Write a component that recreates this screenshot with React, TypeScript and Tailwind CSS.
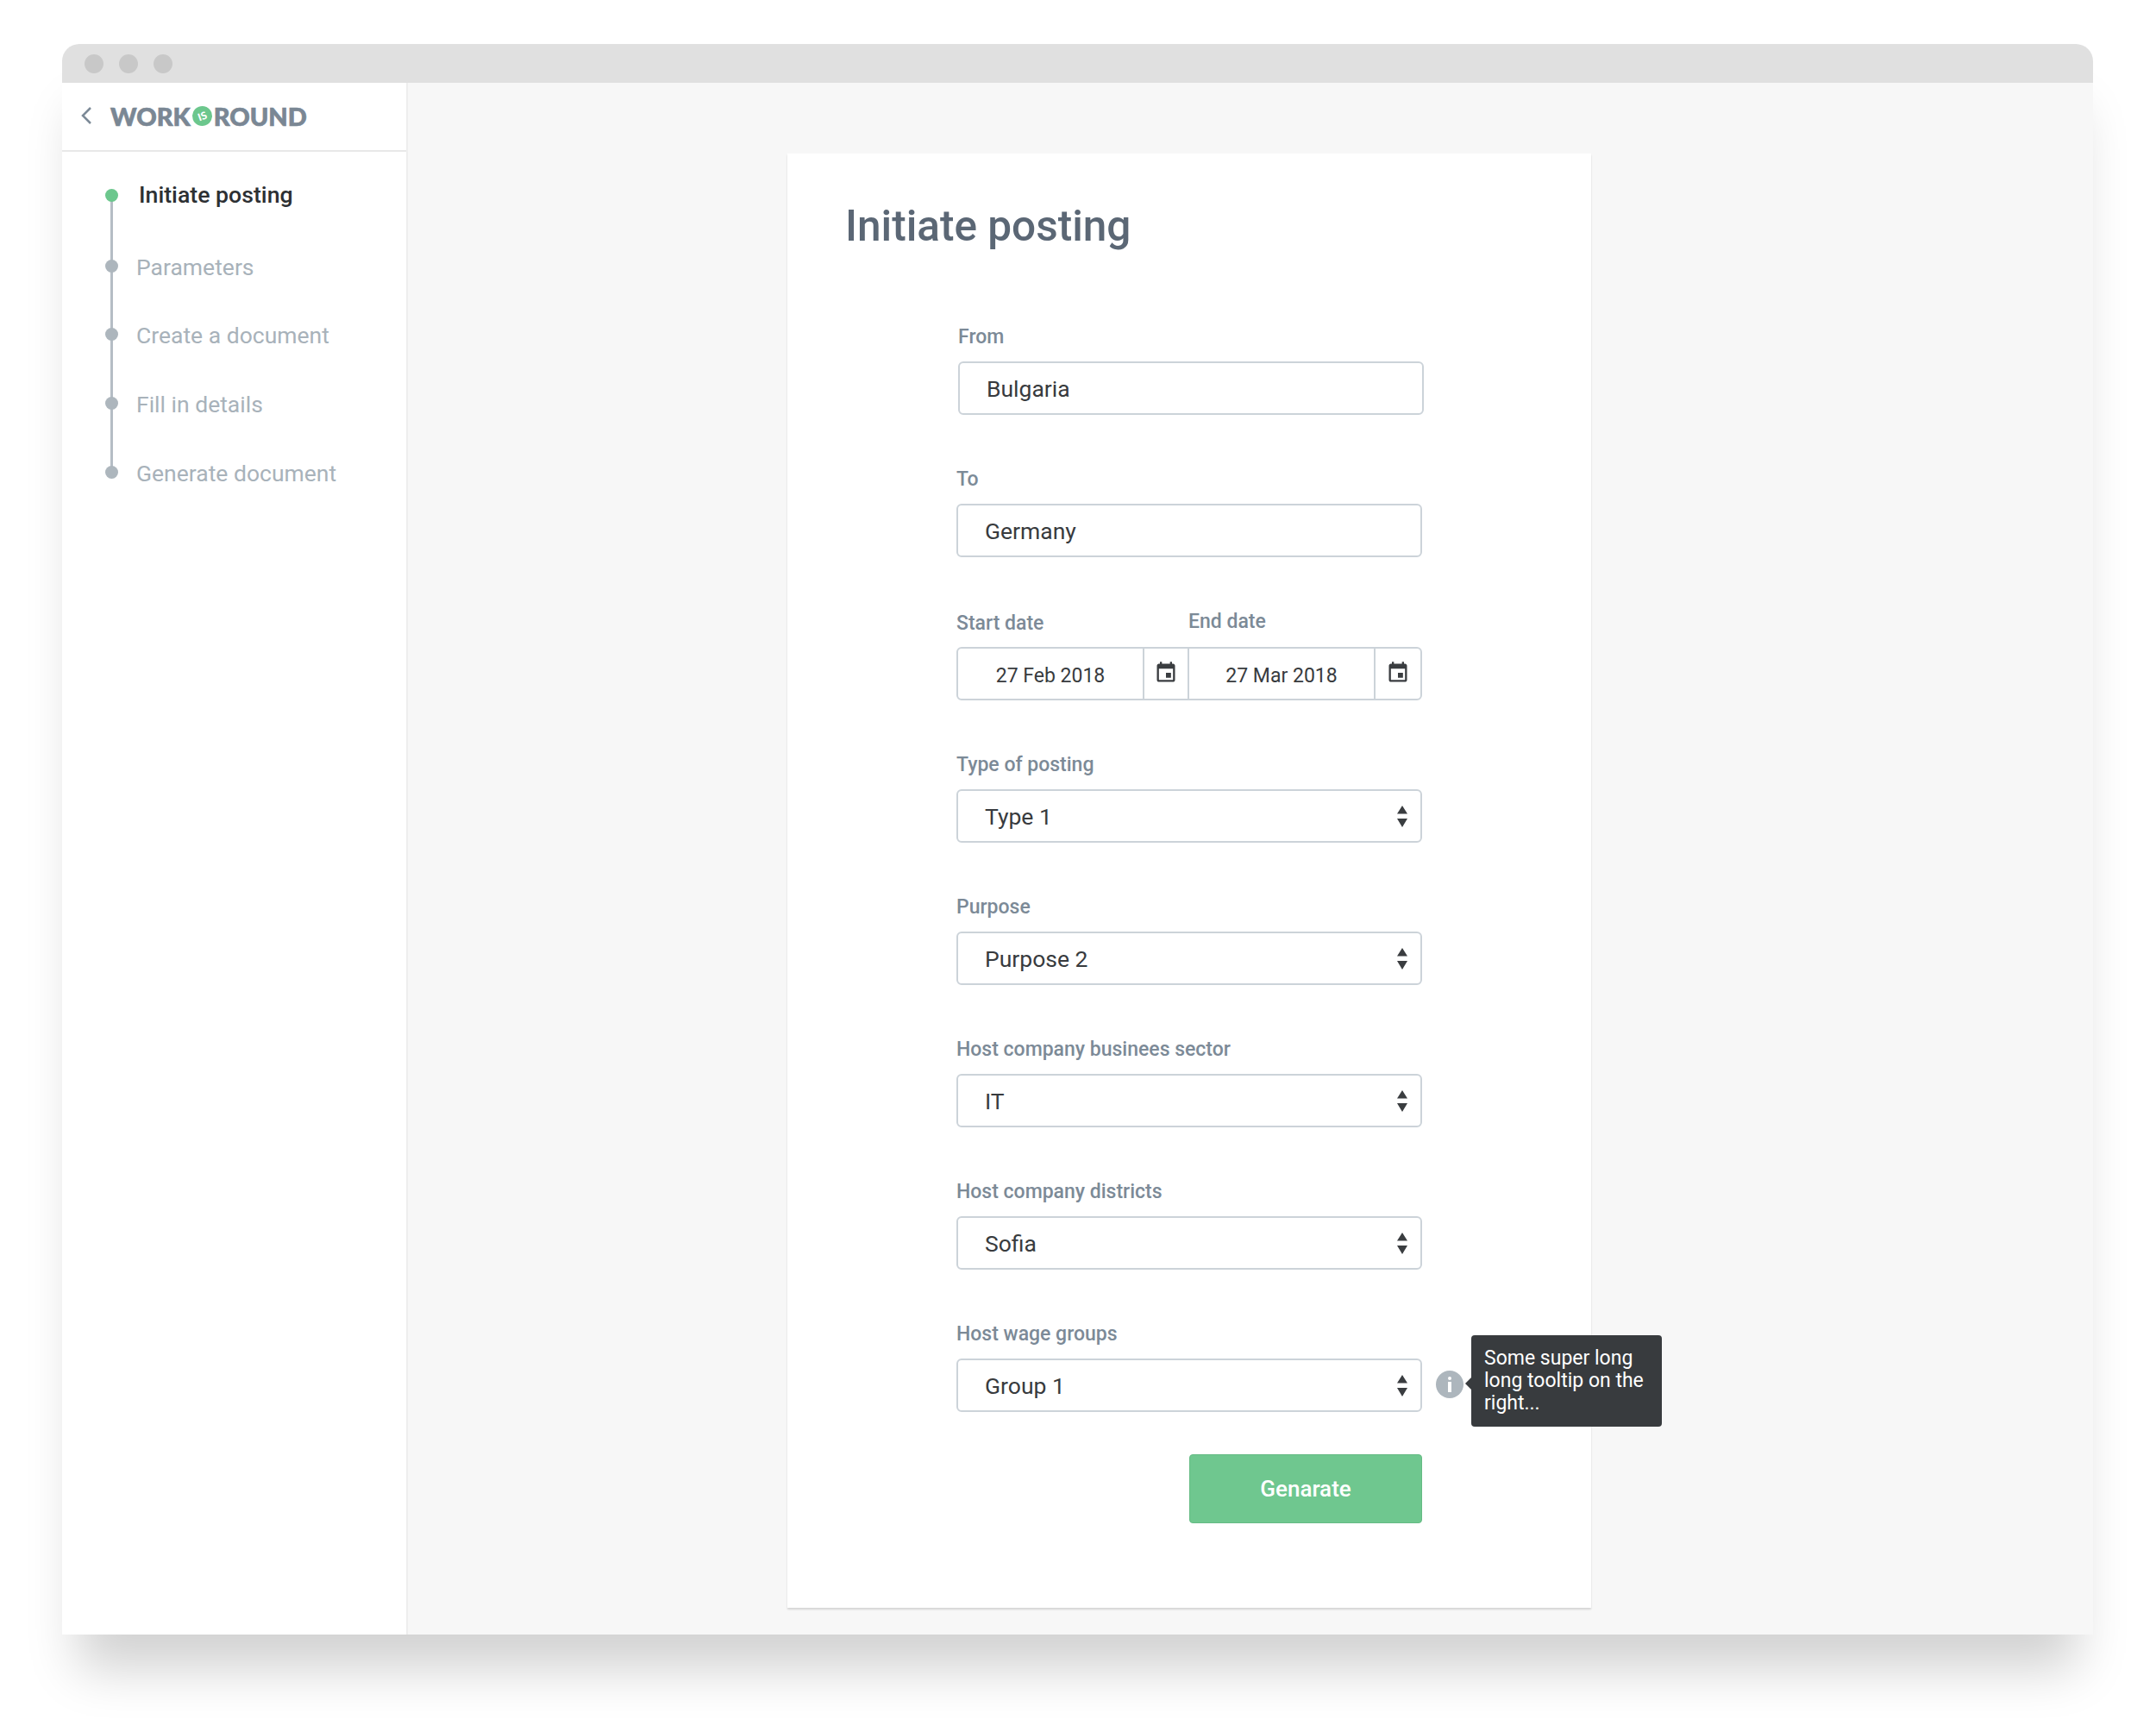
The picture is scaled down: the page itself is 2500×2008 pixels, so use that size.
const steps = [
  { label: "Parameters", offset: "h-[81px]" },
  { label: "Create a document", offset: "h-[79px]" },
  { label: "Fill in details", offset: "h-[80px]" },
  { label: "Generate document", offset: "h-[80px]" },
];

/** Material "event" glyph used by the date pickers */
function CalendarIcon() {
  return (
    <svg viewBox="0 0 24 24" className="w-[28px] h-[28px] fill-[#3a3d40] -mt-[2px]">
      <path d="M17 12h-5v5h5v-5zM16 1v2H8V1H6v2H5c-1.11 0-1.99.9-1.99 2L3 19c0 1.1.89 2 2 2h14c1.1 0 2-.9 2-2V5c0-1.1-.9-2-2-2h-1V1h-2zm3 18H5V8h14v11z" />
    </svg>
  );
}

function SortArrows() {
  return (
    <svg viewBox="0 0 12 25" className="w-[12px] h-[25px] fill-[#3a3d40]">
      <path d="M6 0l6 9.500H0zM0 15h12l-6 10z" />
    </svg>
  );
}

function FieldLabel({ children }: { children: string }) {
  return (
    <div className="h-[26px] mb-[15px] text-[23px] leading-[26px] font-medium text-[#7c8a97]">
      {children}
    </div>
  );
}

function TextField({ label, value }: { label: string; value: string }) {
  return (
    <div className="mb-[62px]">
      <FieldLabel>{label}</FieldLabel>
      <div className="w-[540px] h-[62px] flex items-center pl-[31px] pt-[2px] bg-white border-2 border-[#ccd3d9] rounded-[6px] text-[26.500px] text-[#383b3e]">
        {value}
      </div>
    </div>
  );
}

function SelectField({ label, value }: { label: string; value: string }) {
  return (
    <div className="mb-[62px]">
      <FieldLabel>{label}</FieldLabel>
      <SelectBox value={value} />
    </div>
  );
}

function SelectBox({ value }: { value: string }) {
  return (
    <div className="w-[540px] h-[62px] flex items-center justify-between pl-[31px] pr-[15px] bg-white border-2 border-[#ccd3d9] rounded-[6px] text-[26.500px] text-[#383b3e]">
      <span className="pt-[2px]">{value}</span>
      <SortArrows />
    </div>
  );
}

function DateCell({ value }: { value: string }) {
  return (
    <>
      <div className="w-[214px] flex items-center justify-center pt-[6px] text-[23px] text-[#383b3e]">
        {value}
      </div>
      <div className="w-[54px] flex items-center justify-center border-x-2 border-[#ccd3d9] last:border-r-0">
        <CalendarIcon />
      </div>
    </>
  );
}

export default function App() {
  return (
    <div className="min-h-[2008px] bg-white pt-[51px] pl-[72px] font-[Roboto,sans-serif]">
      <div className="w-[2355px] h-[1844px] flex flex-col shadow-[0_58px_55px_-18px_rgba(0,0,0,0.18)]">
        {/* Browser chrome */}
        <div className="h-[45px] shrink-0 flex items-center gap-[18px] pl-[26px] bg-[#e0e0e0] rounded-t-[20px]">
          <span className="w-[22px] h-[22px] rounded-full bg-[#c8c8c8]" />
          <span className="w-[22px] h-[22px] rounded-full bg-[#c8c8c8]" />
          <span className="w-[22px] h-[22px] rounded-full bg-[#c8c8c8]" />
        </div>

        <div className="flex-1 flex min-h-0">
          {/* Sidebar */}
          <aside className="w-[401px] shrink-0 bg-white border-r-2 border-[#eeeeee]">
            <div className="h-[80px] flex items-center pl-[21px] border-b-2 border-[#e8e8e8]">
              <svg viewBox="0 0 14 22" className="w-[14px] h-[22px] fill-none stroke-[#7c8a97] stroke-[2.500] -mt-[2px]">
                <path d="M12 2L3 11l9 9" />
              </svg>
              <div className="ml-[21px] flex items-center -mt-[2px] text-[#7a8794] text-[29px] leading-none font-black font-[Lato,sans-serif] [-webkit-text-stroke:0.7px_#7a8794]">
                <span>WORK</span>
                <span className="mx-[2px] w-[23px] h-[23px] rounded-full bg-[#6cc78d] flex items-center justify-center text-white text-[12px] -rotate-[20deg] [-webkit-text-stroke:0]">
                  IS
                </span>
                <span>ROUND</span>
              </div>
            </div>

            <div className="relative pl-[50px] pt-[16px]">
              <div className="absolute left-[56px] top-[51px] w-[3px] h-[318px] bg-[#b5bdc5]" />
              <div className="relative h-[69px] flex items-center">
                <span className="w-[15px] h-[15px] rounded-full bg-[#6cc78d]" />
                <span className="ml-[24px] text-[26.700px] font-medium text-[#2d3033]">Initiate posting</span>
              </div>
              {steps.map((step) => (
                <div key={step.label} className={`relative ${step.offset} flex items-end pb-[1px]`}>
                  <span className="w-[15px] h-[15px] rounded-full bg-[#adb6bd] mb-[25px]" />
                  <span className="ml-[21px] mb-[15px] text-[26.500px] leading-[32px] text-[#a8b2ba]">{step.label}</span>
                </div>
              ))}
            </div>
          </aside>

          {/* Main area */}
          <main className="flex-1 bg-[#f7f7f7] pt-[82px] pl-[440px]">
            <div className="w-[932px] h-[1686px] bg-white shadow-[0_2px_2px_rgba(0,0,0,0.14)]">
              <h1 className="pl-[67px] pt-[54px] h-[200px] text-[49.500px] leading-[60px] font-medium text-[#5b6775]">
                Initiate posting
              </h1>

              <div className="pl-[196px]">
                <div className="ml-[2px]">
                  <TextField label="From" value="Bulgaria" />
                </div>
                <TextField label="To" value="Germany" />

                <div className="mb-[62px] pt-[2px]">
                  <div className="flex -mb-[1px]">
                    <div className="w-[269px]">
                      <FieldLabel>Start date</FieldLabel>
                    </div>
                    <div className="-mt-[2px]">
                      <FieldLabel>End date</FieldLabel>
                    </div>
                  </div>
                  <div className="w-[540px] h-[62px] flex items-stretch bg-white border-2 border-[#ccd3d9] rounded-[6px]">
                    <DateCell value="27 Feb 2018" />
                    <DateCell value="27 Mar 2018" />
                  </div>
                </div>

                <SelectField label="Type of posting" value="Type 1" />
                <SelectField label="Purpose" value="Purpose 2" />
                <SelectField label="Host company businees sector" value="IT" />
                <SelectField label="Host company districts" value="Sofia" />

                <div>
                  <FieldLabel>Host wage groups</FieldLabel>
                  <div className="relative flex items-center">
                    <SelectBox value="Group 1" />
                    <span className="ml-[16px] w-[32px] h-[32px] rounded-full bg-[#adb6bd] flex items-center justify-center -mt-[2px]">
                      <svg viewBox="0 0 6 18" className="w-[6px] h-[18px] fill-white">
                        <rect x="1" y="0" width="4" height="4" rx="2" />
                        <rect x="1" y="6" width="4" height="12" />
                      </svg>
                    </span>
                    <div className="absolute left-[597px] -top-[27px] w-[221px] h-[106px] pl-[15px] pt-[14px] rounded-[4px] bg-[#383b3e] text-[23px] leading-[26px] text-white">
                      Some super long long tooltip on the right...
                      <span className="absolute -left-[7px] top-[49px] w-0 h-0 border-y-[7px] border-r-[7px] border-y-transparent border-r-[#383b3e]" />
                    </div>
                  </div>
                  <div className="mt-[49px] ml-[270px] w-[270px] h-[80px] flex items-center justify-center rounded-[4px] bg-[#6fc78f] border border-[#65bb84] text-[26px] font-medium text-white">
                    Genarate
                  </div>
                </div>
              </div>
            </div>
          </main>
        </div>
      </div>
    </div>
  );
}
